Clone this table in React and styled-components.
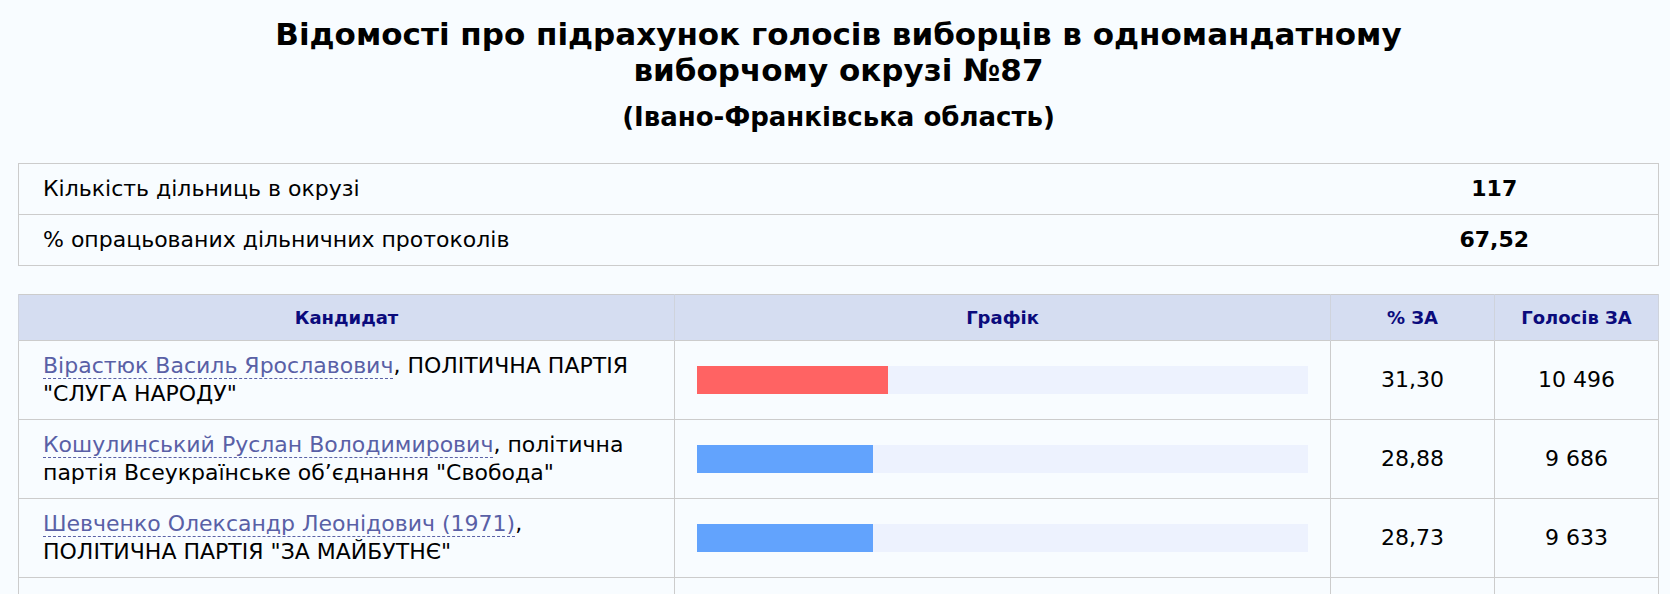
import React from "react";
import styled, { createGlobalStyle } from "styled-components";

const GlobalStyle = createGlobalStyle`
  html, body {
    margin: 0;
    padding: 0;
    background: #f8fcff;
  }
  body {
    font-family: "DejaVu Sans", Verdana, sans-serif;
    color: #000;
  }
  *, *::before, *::after {
    box-sizing: border-box;
  }
`;

const Page = styled.main`
  padding: 16px 11px 0 18px;
`;

const Title = styled.h1`
  margin: 0;
  text-align: center;
  font-size: 31px;
  font-weight: bold;
  line-height: normal;
`;

const Subtitle = styled.h2`
  margin: 14px 0 0;
  text-align: center;
  font-size: 26px;
  font-weight: bold;
  line-height: normal;
`;

const StatsTable = styled.table`
  width: 100%;
  margin-top: 31px;
  border-collapse: collapse;
  table-layout: fixed;
  border: 1px solid #cccccc;
  font-size: 22px;
  line-height: 28px;
`;

const StatLabel = styled.td`
  width: 80%;
  padding: 11px 24px;
  border-top: 1px solid #cccccc;
  text-align: left;
`;

const StatValue = styled.td`
  width: 20%;
  padding: 11px 0;
  border-top: 1px solid #cccccc;
  text-align: center;
  font-weight: bold;
`;

const ResultsTable = styled.table`
  width: 100%;
  margin-top: 28px;
  border-collapse: collapse;
  table-layout: fixed;
  border: 1px solid #cccccc;
  font-size: 22px;
  line-height: 28px;
`;

const HeadCell = styled.th`
  width: ${(p) => p.$w};
  background: #d5ddf1;
  color: #0b0b7c;
  font-size: 18px;
  line-height: 23px;
  font-weight: bold;
  padding: 11px 8px;
  text-align: center;
  border: 1px solid #cfd3dc;
  border-top: none;
  border-bottom: none;
`;

const Cell = styled.td`
  padding: 11px ${(p) => (p.$bar ? "22px" : "24px")};
  border: 1px solid #cccccc;
  text-align: ${(p) => (p.$center ? "center" : "left")};
  vertical-align: middle;
`;

const CandidateLink = styled.a`
  color: #5960a6;
  text-decoration: none;
  border-bottom: 1px dashed #5960a6;
  cursor: pointer;
`;

const Track = styled.div`
  height: 28px;
  background: #edf2fe;
  display: flex;
`;

const Fill = styled.div`
  height: 100%;
  background: ${(p) => p.$color};
`;

const candidates = [
  {
    name: "Вірастюк Василь Ярославович",
    party: "ПОЛІТИЧНА ПАРТІЯ \"СЛУГА НАРОДУ\"",
    pct: "31,30",
    value: 31.3,
    votes: "10 496",
    color: "#ff6363",
  },
  {
    name: "Кошулинський Руслан Володимирович",
    party: "політична партія Всеукраїнське об’єднання \"Свобода\"",
    pct: "28,88",
    value: 28.88,
    votes: "9 686",
    color: "#62a3fd",
  },
  {
    name: "Шевченко Олександр Леонідович (1971)",
    party: "ПОЛІТИЧНА ПАРТІЯ \"ЗА МАЙБУТНЄ\"",
    pct: "28,73",
    value: 28.73,
    votes: "9 633",
    color: "#62a3fd",
  },
  {
    name: "",
    party: "",
    pct: "",
    value: 0,
    votes: "",
    color: "#62a3fd",
  },
];

export default function App() {
  return (
    <>
      <GlobalStyle />
      <Page>
        <Title>
          Відомості про підрахунок голосів виборців в одномандатному
          <br />
          виборчому окрузі №87
        </Title>
        <Subtitle>(Івано-Франківська область)</Subtitle>

        <StatsTable>
          <tbody>
            <tr>
              <StatLabel>Кількість дільниць в окрузі</StatLabel>
              <StatValue>117</StatValue>
            </tr>
            <tr>
              <StatLabel>% опрацьованих дільничних протоколів</StatLabel>
              <StatValue>67,52</StatValue>
            </tr>
          </tbody>
        </StatsTable>

        <ResultsTable>
          <thead>
            <tr>
              <HeadCell $w="40%">Кандидат</HeadCell>
              <HeadCell $w="40%">Графік</HeadCell>
              <HeadCell $w="10%">% ЗА</HeadCell>
              <HeadCell $w="10%">Голосів ЗА</HeadCell>
            </tr>
          </thead>
          <tbody>
            {candidates.map((c, i) =>
              c.name ? (
                <tr key={i}>
                  <Cell>
                    <CandidateLink>{c.name}</CandidateLink>, {c.party}
                  </Cell>
                  <Cell $bar>
                    <Track>
                      <Fill $color={c.color} style={{ width: `${c.value}%` }} />
                    </Track>
                  </Cell>
                  <Cell $center>{c.pct}</Cell>
                  <Cell $center>{c.votes}</Cell>
                </tr>
              ) : (
                <tr key={i}>
                  <Cell>&nbsp;<br />&nbsp;</Cell>
                  <Cell $bar />
                  <Cell $center />
                  <Cell $center />
                </tr>
              )
            )}
          </tbody>
        </ResultsTable>
      </Page>
    </>
  );
}
